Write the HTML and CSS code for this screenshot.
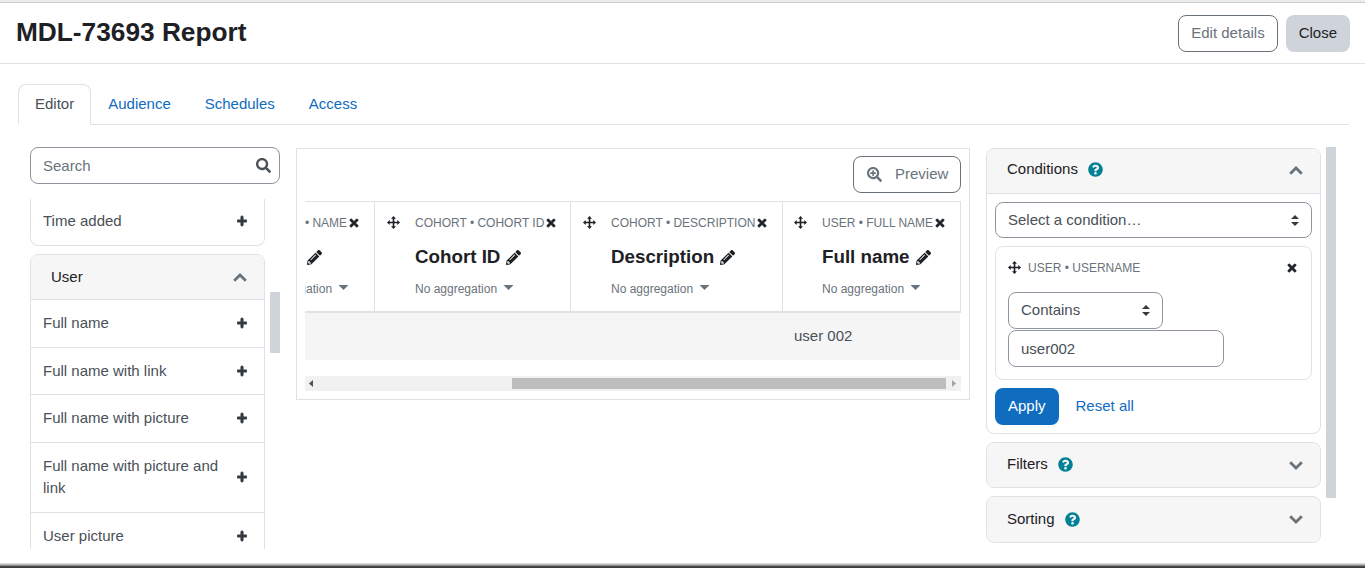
FILE: index.html
```html
<!DOCTYPE html>
<html lang="en">
<head>
<meta charset="utf-8">
<title>MDL-73693 Report</title>
<link rel="stylesheet" href="styles.css">
</head>
<body>
<svg class="defs" aria-hidden="true">
  <symbol id="i-plus" viewBox="0 0 448 512"><path d="M416 208H272V64c0-17.67-14.33-32-32-32h-32c-17.67 0-32 14.33-32 32v144H32c-17.67 0-32 14.33-32 32v32c0 17.67 14.33 32 32 32h144v144c0 17.67 14.33 32 32 32h32c17.67 0 32-14.33 32-32V304h144c17.67 0 32-14.33 32-32v-32c0-17.67-14.33-32-32-32z"/></symbol>
  <symbol id="i-times" viewBox="0 0 352 512"><path d="M242.72 256l100.07-100.07c12.28-12.28 12.28-32.19 0-44.48l-22.24-22.24c-12.28-12.28-32.19-12.28-44.48 0L176 189.28 75.93 89.21c-12.28-12.28-32.19-12.28-44.48 0L9.21 111.45c-12.28 12.28-12.28 32.19 0 44.48L109.28 256 9.21 356.07c-12.28 12.28-12.28 32.19 0 44.48l22.24 22.24c12.28 12.28 32.2 12.28 44.48 0L176 322.72l100.07 100.07c12.28 12.28 32.2 12.28 44.48 0l22.24-22.24c12.28-12.28 12.28-32.19 0-44.48L242.72 256z"/></symbol>
  <symbol id="i-help" viewBox="0 0 512 512"><path d="M504 256c0 136.997-111.043 248-248 248S8 392.997 8 256C8 119.083 119.043 8 256 8s248 111.083 248 248zM262.655 90c-54.497 0-89.255 22.957-116.549 63.758-3.536 5.286-2.353 12.415 2.715 16.258l34.699 26.31c5.205 3.947 12.621 3.008 16.665-2.122 17.864-22.658 30.113-35.797 57.303-35.797 20.429 0 45.698 13.148 45.698 32.958 0 14.976-12.363 22.667-32.534 33.976C247.128 238.528 216 254.941 216 296v4c0 6.627 5.373 12 12 12h56c6.627 0 12-5.373 12-12v-1.333c0-28.462 83.186-29.647 83.186-106.667 0-58.002-60.165-102-116.531-102zM256 338c-25.365 0-46 20.635-46 46 0 25.364 20.635 46 46 46s46-20.636 46-46c0-25.365-20.635-46-46-46z"/></symbol>
  <symbol id="i-search" viewBox="0 0 512 512"><path d="M505 442.7L405.3 343c-4.5-4.5-10.6-7-17-7H372c27.6-35.3 44-79.7 44-128C416 93.1 322.9 0 208 0S0 93.1 0 208s93.1 208 208 208c48.3 0 92.7-16.4 128-44v16.3c0 6.4 2.5 12.5 7 17l99.7 99.7c9.4 9.4 24.6 9.4 33.9 0l28.3-28.3c9.4-9.4 9.4-24.6.1-34zM208 336c-70.7 0-128-57.2-128-128 0-70.7 57.2-128 128-128 70.7 0 128 57.2 128 128 0 70.7-57.2 128-128 128z"/></symbol>
  <symbol id="i-zoom" viewBox="0 0 512 512"><path d="M304 192v32c0 6.6-5.4 12-12 12h-56v56c0 6.6-5.4 12-12 12h-32c-6.6 0-12-5.4-12-12v-56h-56c-6.6 0-12-5.4-12-12v-32c0-6.6 5.4-12 12-12h56v-56c0-6.6 5.4-12 12-12h32c6.6 0 12 5.4 12 12v56h56c6.6 0 12 5.4 12 12zm201 284.7L476.7 505c-9.4 9.4-24.6 9.4-33.9 0L343 405.3c-4.5-4.5-7-10.6-7-17V372c-35.3 27.6-79.7 44-128 44C93.1 416 0 322.9 0 208S93.1 0 208 0s208 93.1 208 208c0 48.3-16.4 92.7-44 128h16.3c6.4 0 12.5 2.5 17 7l99.7 99.7c9.3 9.4 9.3 24.6 0 34zM344 208c0-75.2-60.8-136-136-136S72 132.8 72 208s60.8 136 136 136 136-60.8 136-136z"/></symbol>
  <symbol id="i-pencil" viewBox="0 0 512 512"><path d="M497.9 142.1l-46.1 46.1c-4.7 4.7-12.3 4.7-17 0l-111-111c-4.7-4.7-4.7-12.3 0-17l46.1-46.1c18.7-18.7 49.1-18.7 67.9 0l60.1 60.1c18.8 18.7 18.8 49.1 0 67.9zM284.2 99.8L21.6 362.4.4 483.9c-2.9 16.4 11.4 30.6 27.8 27.8l121.5-21.3 262.6-262.6c4.7-4.7 4.7-12.3 0-17l-111-111c-4.8-4.7-12.4-4.7-17.1 0zM124.1 339.9c-5.5-5.5-5.5-14.3 0-19.8l154-154c5.5-5.5 14.3-5.5 19.8 0s5.5 14.3 0 19.8l-154 154c-5.5 5.5-14.3 5.5-19.8 0zM88 424h48v36.3l-64.5 11.3-31.1-31.1L51.7 376H88v48z"/></symbol>
  <symbol id="i-move" viewBox="0 0 24 24"><path d="M12 0l4.5 5h-3v5.5H19v-3l5 4.5-5 4.5v-3h-5.5V19h3L12 24l-4.5-5h3v-5.5H5v3L0 12l5-4.5v3h5.5V5h-3z"/></symbol>
  <symbol id="i-up" viewBox="0 0 14 9"><path d="M1.2 7.8 7 2l5.8 5.8" fill="none" stroke="currentColor" stroke-width="2.8"/></symbol>
  <symbol id="i-down" viewBox="0 0 14 9"><path d="M1.2 1.2 7 7l5.8-5.8" fill="none" stroke="currentColor" stroke-width="2.8"/></symbol>
  <symbol id="i-caret" viewBox="0 0 10 5"><path d="M0 0h10L5 5z"/></symbol>
  <symbol id="i-updown" viewBox="0 0 8 11"><path d="M4 0l4 4H0zM4 11 0 7h8z"/></symbol>
</svg>

<div class="top-edge"></div>
<header class="page-head">
  <h1 class="page-title">MDL-73693 Report</h1>
  <div class="head-actions">
    <a class="btn btn-outline">Edit details</a>
    <a class="btn btn-grey">Close</a>
  </div>
</header>

<nav class="tabs">
  <a class="tab tab-active">Editor</a>
  <a class="tab">Audience</a>
  <a class="tab">Schedules</a>
  <a class="tab">Access</a>
</nav>

<main class="editor">
  <aside class="left-col">
    <div class="search">
      <input class="field search-input" type="text" placeholder="Search">
      <svg class="search-icon"><use href="#i-search"/></svg>
    </div>
    <div class="left-scroll">
      <div class="left-list">
        <section class="card card-clipped">
          <div class="row row-first"><span class="row-text">Time added</span><svg class="plus"><use href="#i-plus"/></svg></div>
        </section>
        <section class="card">
          <div class="card-head card-head-open card-head-user"><span class="card-title">User</span><svg class="chev"><use href="#i-up"/></svg></div>
          <div class="row"><span class="row-text">Full name</span><svg class="plus"><use href="#i-plus"/></svg></div>
          <div class="row"><span class="row-text">Full name with link</span><svg class="plus"><use href="#i-plus"/></svg></div>
          <div class="row"><span class="row-text">Full name with picture</span><svg class="plus"><use href="#i-plus"/></svg></div>
          <div class="row"><span class="row-text">Full name with picture and link</span><svg class="plus"><use href="#i-plus"/></svg></div>
          <div class="row"><span class="row-text">User picture</span><svg class="plus"><use href="#i-plus"/></svg></div>
        </section>
      </div>
      <div class="left-thumb"></div>
    </div>
  </aside>

  <section class="report">
    <div class="report-bar">
      <button class="btn btn-outline btn-preview" type="button"><svg class="zoom-icon"><use href="#i-zoom"/></svg>Preview</button>
    </div>
    <div class="grid-head">
      <div class="col col-a">
        <div class="col-top"><svg class="move"><use href="#i-move"/></svg><span class="col-label">COHORT • NAME</span><svg class="times"><use href="#i-times"/></svg></div>
        <div class="col-name">Name <svg class="pencil"><use href="#i-pencil"/></svg></div>
        <div class="col-agg">No aggregation <svg class="caret"><use href="#i-caret"/></svg></div>
      </div>
      <div class="col col-b">
        <div class="col-top"><svg class="move"><use href="#i-move"/></svg><span class="col-label">COHORT • COHORT ID</span><svg class="times"><use href="#i-times"/></svg></div>
        <div class="col-name">Cohort ID <svg class="pencil"><use href="#i-pencil"/></svg></div>
        <div class="col-agg">No aggregation <svg class="caret"><use href="#i-caret"/></svg></div>
      </div>
      <div class="col col-c">
        <div class="col-top"><svg class="move"><use href="#i-move"/></svg><span class="col-label">COHORT • DESCRIPTION</span><svg class="times"><use href="#i-times"/></svg></div>
        <div class="col-name">Description <svg class="pencil"><use href="#i-pencil"/></svg></div>
        <div class="col-agg">No aggregation <svg class="caret"><use href="#i-caret"/></svg></div>
      </div>
      <div class="col col-d">
        <div class="col-top"><svg class="move"><use href="#i-move"/></svg><span class="col-label">USER • FULL NAME</span><svg class="times"><use href="#i-times"/></svg></div>
        <div class="col-name">Full name <svg class="pencil"><use href="#i-pencil"/></svg></div>
        <div class="col-agg">No aggregation <svg class="caret"><use href="#i-caret"/></svg></div>
      </div>
    </div>
    <div class="grid-row"><div class="cell">user 002</div></div>
    <div class="hscroll">
      <svg class="hs-arrow hs-left" viewBox="0 0 4 7"><path d="M4 0v7L0 3.5z"/></svg>
      <div class="hs-thumb"></div>
      <svg class="hs-arrow hs-right" viewBox="0 0 4 7"><path d="M0 0v7l4-3.5z"/></svg>
    </div>
  </section>

  <aside class="right-col">
    <div class="right-cards">
      <section class="card">
        <div class="card-head card-head-open card-head-cond"><span class="card-title">Conditions</span><svg class="help"><use href="#i-help"/></svg><svg class="chev"><use href="#i-up"/></svg></div>
        <div class="cond-body">
          <div class="select-wrap">
            <select class="field select-main"><option>Select a condition…</option></select>
            <svg class="updown"><use href="#i-updown"/></svg>
          </div>
          <div class="cond-item">
            <div class="cond-top"><svg class="move"><use href="#i-move"/></svg><span class="col-label cond-label">USER • USERNAME</span><svg class="times"><use href="#i-times"/></svg></div>
            <div class="select-wrap select-short">
              <select class="field"><option>Contains</option></select>
              <svg class="updown"><use href="#i-updown"/></svg>
            </div>
            <input class="field cond-input" type="text" value="user002">
          </div>
          <div class="cond-actions">
            <a class="btn btn-primary">Apply</a>
            <a class="link">Reset all</a>
          </div>
        </div>
      </section>
      <section class="card">
        <div class="card-head card-head-filters"><span class="card-title">Filters</span><svg class="help"><use href="#i-help"/></svg><svg class="chev"><use href="#i-down"/></svg></div>
      </section>
      <section class="card">
        <div class="card-head card-head-tall"><span class="card-title">Sorting</span><svg class="help"><use href="#i-help"/></svg><svg class="chev"><use href="#i-down"/></svg></div>
      </section>
    </div>
    <div class="right-thumb"></div>
  </aside>
</main>
<div class="bottom-edge"></div>
</body>
</html>
```
FILE: styles.css
```css
* { box-sizing: border-box; }
html, body { height: 100%; }
body {
  margin: 0;
  height: 568px;
  overflow: hidden;
  display: flex;
  flex-direction: column;
  background: #fff;
  color: #1d2125;
  font: 15px/22.5px "Liberation Sans", Arial, sans-serif;
}
.defs { display: none; }
svg { display: block; flex: none; fill: currentColor; }

.top-edge { flex: none; height: 3px; background: linear-gradient(#ececec 0 2px, #cccccc 2px); }
.page-head {
  flex: none;
  height: 61px;
  padding: 12px 15px 0 16px;
  display: flex;
  align-items: flex-start;
  justify-content: space-between;
  border-bottom: 1px solid #dee2e6;
}
.page-title { margin: 2px 0 0; font-size: 26.25px; line-height: 31px; font-weight: 700; }
.head-actions { display: flex; gap: 8px; }

.btn {
  display: inline-flex;
  align-items: center;
  padding: 6px 12px;
  border: 1px solid transparent;
  border-radius: 8px;
  font: inherit;
  background: none;
}
.btn-outline { border-color: #6a737b; color: #6a737b; }
.btn-grey { background: #ced4da; color: #1d2125; }
.btn-primary { background: #0f6cbf; color: #fff; }
.link { color: #0f6cbf; }

.tabs {
  flex: none;
  display: flex;
  margin: 20px 16px 0 18px;
  height: 41px;
  border-bottom: 1px solid #dee2e6;
}
.tab {
  height: 41px;
  padding: 8px 16px;
  border: 1px solid transparent;
  border-radius: 8px 8px 0 0;
  color: #0f6cbf;
}
.tab-active { color: #495057; border-color: #dee2e6 #dee2e6 #fff; background: #fff; }

.editor {
  flex: 1;
  min-height: 0;
  display: flex;
  align-items: flex-start;
  gap: 16px;
  padding: 22px 0 0 30px;
}

.left-col { flex: none; width: 250px; }
.search { position: relative; }
.field {
  display: block;
  width: 100%;
  height: 37px;
  padding: 6px 12px;
  border: 1px solid #8f959e;
  border-radius: 8px;
  background: #fff;
  color: #495057;
  font: inherit;
  appearance: none;
}
.field::placeholder { color: #6a737b; opacity: 1; }
.search-icon { position: absolute; right: 9px; top: 11px; width: 15px; height: 15px; color: #495057; }

.left-scroll { display: flex; gap: 5px; margin-top: 15px; height: 350px; overflow: hidden; }
.left-list { flex: none; width: 235px; display: flex; flex-direction: column; gap: 8px; }
.left-thumb { flex: none; width: 10px; height: 61px; margin-top: 93px; background: #ced4da; }

.card { flex: none; border: 1px solid #dee2e6; border-radius: 8px; background: #fff; overflow: hidden; }
.card-clipped { border-top: 0; border-radius: 0 0 8px 8px; }
.card-head {
  display: flex;
  align-items: center;
  height: 44px;
  padding: 0 17px 0 20px;
  background: #f6f6f6;
}
.card-head-tall { height: 45px; }
.card-head-open { border-bottom: 1px solid #dee2e6; height: 45px; }
.card-head-user { height: 45.5px; padding-top: 1px; }
.card-head-cond { padding-bottom: 4px; }
.card-head-cond .chev { margin-top: 3px; }
.card-head-filters { padding-bottom: 2px; }
.card-head-filters .chev { margin-top: 2px; }
.card-title { color: #1d2125; }
.chev { width: 14px; height: 9px; margin-left: auto; color: #6a737b; }
.help { width: 15px; height: 15px; margin-left: 10px; color: #008196; }

.row {
  display: flex;
  align-items: center;
  gap: 12px;
  padding: 12px 17px 12px 12px;
  border-bottom: 1px solid #dee2e6;
  color: #495057;
}
.row-first { padding-top: 11px; border-bottom: 0; }
.row-text { flex: 1; }
.plus { width: 10px; height: 12px; color: #343a40; stroke: currentColor; stroke-width: 40; }

.report {
  flex: none;
  width: 674px;
  margin-top: 1px;
  padding: 7px 8px 8px;
  border: 1px solid #dee2e6;
}
.report-bar { display: flex; justify-content: flex-end; height: 37px; margin-bottom: 8px; }
.btn-preview { height: 37px; width: 108px; padding: 0 12px 0 13px; gap: 13px; cursor: default; }
.zoom-icon { width: 15px; height: 15px; }

.grid-head {
  display: flex;
  justify-content: flex-end;
  height: 112px;
  overflow: hidden;
  border-top: 1px solid #dee2e6;
  border-bottom: 2px solid #dee2e6;
}
.col { flex: none; height: 109px; padding: 12px 0 0 12px; border-right: 1px solid #dee2e6; }
.col-a { width: 165px; }
.col-b { width: 196px; }
.col-c { width: 212px; }
.col-d { width: 178px; padding-left: 11px; }
.col-top { display: flex; align-items: center; height: 18px; }
.col-label { margin-left: 15px; font-size: 12px; line-height: 18px; color: #6a737b; white-space: nowrap; }
.move { width: 13px; height: 13px; margin-top: -2px; color: #1d2125; }
.times { width: 10px; height: 12px; margin-left: 2px; color: #1d2125; stroke: currentColor; stroke-width: 30; }
.col-name {
  display: flex;
  align-items: center;
  gap: 6px;
  height: 28px;
  margin: 11px 0 0 28px;
  font-size: 18.75px;
  font-weight: 700;
  white-space: nowrap;
}
.pencil { width: 15px; height: 15px; margin-top: 1px; }
.col-agg {
  display: flex;
  align-items: center;
  gap: 6px;
  height: 18px;
  margin: 9px 0 0 28px;
  font-size: 12px;
  color: #6a737b;
  white-space: nowrap;
}
.caret { width: 11px; height: 5px; margin-top: -3px; }

.grid-row { display: flex; justify-content: flex-end; height: 47px; margin-right: 1px; background: #f5f5f5; }
.cell { width: 177px; padding: 12px 11px; color: #495057; }

.hscroll {
  display: flex;
  align-items: center;
  height: 15px;
  margin-top: 16px;
  background: #f1f1f1;
}
.hs-arrow { width: 4px; height: 7px; }
.hs-left { margin: 0 199px 0 4px; color: #505050; }
.hs-right { margin-left: 6px; color: #a3a3a3; }
.hs-thumb { width: 434px; height: 11px; background: #bdbdbd; }

.right-col { flex: none; display: flex; gap: 5px; width: 350px; }
.right-cards { flex: none; width: 335px; margin-top: 1px; display: flex; flex-direction: column; gap: 8px; }
.right-thumb { flex: none; width: 10px; height: 351px; background: #ced4da; }

.cond-body { padding: 8px; display: flex; flex-direction: column; }
.select-wrap { position: relative; }
.select-main { height: 36px; }
.updown { position: absolute; right: 13px; top: 13px; width: 8px; height: 11px; color: #343a40; }
.cond-item {
  margin-top: 8px;
  height: 134px;
  padding: 12px;
  border: 1px solid #dee2e6;
  border-radius: 8px;
}
.cond-top { display: flex; align-items: center; height: 18px; }
.cond-label { margin-left: 7px; }
.cond-top .times { margin-left: auto; margin-right: 2px; }
.select-short { width: 155px; margin-top: 15px; }
.cond-input { width: 216px; margin-top: 1px; }
.cond-actions { display: flex; align-items: center; gap: 17px; margin-top: 8px; }
.cond-actions .btn-primary { height: 37px; }
.bottom-edge { flex: none; height: 5px; background: linear-gradient(#e8e8e8, #b0b0b0 40%, #555 60%, #333); }
```
